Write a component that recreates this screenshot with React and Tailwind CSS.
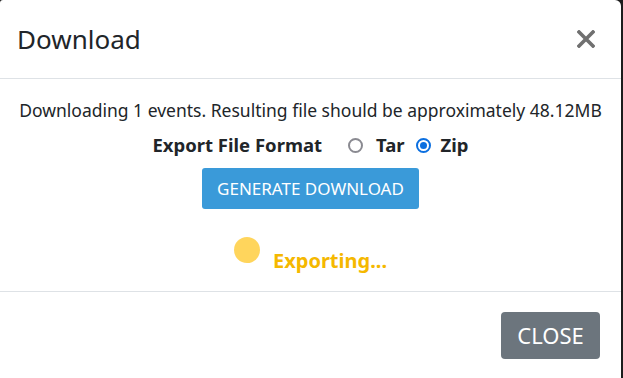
import React from "react";

const Radio = ({ checked }) => (
  <span
    className={
      "inline-flex items-center justify-center w-[15px] h-[15px] rounded-full border-2 " +
      (checked ? "border-[#0b6fe0]" : "border-[#8a8a91]")
    }
  >
    {checked && <span className="w-[7px] h-[7px] rounded-full bg-[#0b6fe0]" />}
  </span>
);

const App = () => {
  return (
    <div className="w-[623px] h-[378px] bg-[#1c1c1c] overflow-hidden font-['Noto_Sans',sans-serif] text-[#212529]">
      <div className="w-[621px] h-[420px] bg-white rounded-tr-[6px] rounded-tl-[3px] flex flex-col">
        <div className="h-[79px] flex items-center justify-between pl-[17px] pr-[25px] border-b border-[#dee2e6]">
          <h1 className="text-[26px] leading-none font-normal">Download</h1>
          <svg width="18" height="18" viewBox="0 0 18 18" className="mr-[1px]">
            <path d="M2 2 L16 16 M16 2 L2 16" stroke="#707070" strokeWidth="3.6" strokeLinecap="square" />
          </svg>
        </div>
        <div className="h-[213px] flex flex-col items-center border-b border-[#dee2e6]">
          <p className="mt-[19px] text-[17.5px] leading-6">
            Downloading 1 events. Resulting file should be approximately 48.12MB
          </p>
          <div className="mt-[11px] flex items-center text-[18.5px] font-bold leading-6">
            <span>Export File Format</span>
            <span className="ml-[26px] flex items-center gap-[13px]">
              <Radio />
              <span>Tar</span>
            </span>
            <span className="ml-[11px] flex items-center gap-[10px]">
              <Radio checked />
              <span>Zip</span>
            </span>
          </div>
          <button className="mt-[11px] w-[217px] h-[41px] bg-[#3a9ad9] rounded-[3px] text-white text-[17px] uppercase">
            Generate Download
          </button>
          <div className="mt-[28px] flex items-start">
            <span className="w-[26px] h-[26px] rounded-full bg-[#ffd55c]" />
            <span className="ml-[13px] mt-[12px] text-[20px] font-bold text-[#f5b800] leading-6">Exporting...</span>
          </div>
        </div>
        <div className="flex justify-end pr-[21px] pt-[20px]">
          <button className="w-[99px] h-[47px] bg-[#6c757d] rounded-[4px] text-white text-[22px] uppercase">
            Close
          </button>
        </div>
      </div>
    </div>
  );
};

export default App;
